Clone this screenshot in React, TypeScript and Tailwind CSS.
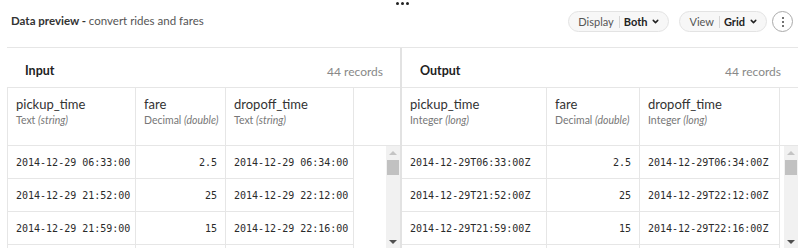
import { ChevronDown } from 'lucide-react';

type Column = { name: string; kind: string; sub: string; width: string; align?: 'right' };

const inputColumns: Column[] = [
  { name: 'pickup_time', kind: 'Text', sub: 'string', width: 'w-[128px]' },
  { name: 'fare', kind: 'Decimal', sub: 'double', width: 'w-[90px]', align: 'right' },
  { name: 'dropoff_time', kind: 'Text', sub: 'string', width: 'w-[128px]' },
];

const outputColumns: Column[] = [
  { name: 'pickup_time', kind: 'Integer', sub: 'long', width: 'w-[145px]' },
  { name: 'fare', kind: 'Decimal', sub: 'double', width: 'w-[93px]', align: 'right' },
  { name: 'dropoff_time', kind: 'Integer', sub: 'long', width: 'w-[140px]' },
];

const inputRows = [
  ['2014-12-29 06:33:00', '2.5', '2014-12-29 06:34:00'],
  ['2014-12-29 21:52:00', '25', '2014-12-29 22:12:00'],
  ['2014-12-29 21:59:00', '15', '2014-12-29 22:16:00'],
];

const outputRows = [
  ['2014-12-29T06:33:00Z', '2.5', '2014-12-29T06:34:00Z'],
  ['2014-12-29T21:52:00Z', '25', '2014-12-29T22:12:00Z'],
  ['2014-12-29T21:59:00Z', '15', '2014-12-29T22:16:00Z'],
];

function Pill({ label, value }: { label: string; value: string }) {
  return (
    <div className="flex items-center h-[21px] pl-[9px] pr-[8px] rounded-full border border-[#e3e3e3] bg-[#f7f7f7] text-[11px] leading-none">
      <span className="text-[#555]">{label}</span>
      <span className="ml-[5px] mr-[4px] h-[12px] w-px bg-[#d6d6d6]"></span>
      <span className="font-bold text-[#222]">{value}</span>
      <ChevronDown size={9} strokeWidth={4} className="ml-[4px] text-[#222]" />
    </div>
  );
}

function Scrollbar() {
  return (
    <div className="w-[14px] bg-[#f1f1f1] flex flex-col items-center">
      <div className="h-[14px] flex items-center justify-center">
        <div className="w-0 h-0 border-l-[4px] border-r-[4px] border-b-[4px] border-l-transparent border-r-transparent border-b-[#c4c4c4]"></div>
      </div>
      <div className="w-[12px] h-[15px] bg-[#c1c1c1]"></div>
      <div className="flex-1"></div>
      <div className="h-[12px] flex items-center justify-center">
        <div className="w-0 h-0 border-l-[4px] border-r-[4px] border-t-[4px] border-l-transparent border-r-transparent border-t-[#505050]"></div>
      </div>
    </div>
  );
}

function Panel({
  title,
  columns,
  rows,
  className,
  bordered,
}: {
  title: string;
  columns: Column[];
  rows: string[][];
  className: string;
  bordered?: boolean;
}) {
  const edge = bordered ? 'border-l border-[#e6e6e6]' : '';
  return (
    <div className={`flex flex-col ${className}`}>
      <div className="h-[39px] shrink-0 flex items-center justify-between pt-[8px] pl-[18px] pr-[17px]">
        <span className="text-[12.5px] font-bold text-[#222]">{title}</span>
        <span className="text-[12px] text-[#888]">44 records</span>
      </div>
      <div className={`flex h-[59px] shrink-0 border-t border-b border-[#e6e6e6] ${edge}`}>
        {columns.map((col) => (
          <div key={col.name} className={`${col.width} shrink-0 border-r border-[#e6e6e6] px-[8px] pt-[7px] whitespace-nowrap`}>
            <div className="text-[13px] text-[#333] leading-[18px]">{col.name}</div>
            <div className="text-[10.5px] text-[#777] leading-[15px]">
              {col.kind} <span className="italic">({col.sub})</span>
            </div>
          </div>
        ))}
        <div className="flex-1"></div>
      </div>
      <div className="flex flex-1 min-h-0">
        <div className={`flex flex-col ${edge}`}>
          {rows.map((row, i) => (
            <div key={i} className="flex h-[33px] shrink-0 border-b border-[#e6e6e6] font-['DejaVu_Sans_Mono',monospace] text-[10px] text-[#2a2a2a] whitespace-nowrap">
              {row.map((cell, j) => (
                <div
                  key={j}
                  className={`${columns[j].width} shrink-0 border-r border-[#e6e6e6] px-[8px] flex items-center ${
                    columns[j].align === 'right' ? 'justify-end' : ''
                  }`}
                >
                  {cell}
                </div>
              ))}
            </div>
          ))}
          <div className="flex flex-1">
            {columns.map((col) => (
              <div key={col.name} className={`${col.width} shrink-0 border-r border-[#e6e6e6]`}></div>
            ))}
          </div>
        </div>
        <div className="flex-1"></div>
        <Scrollbar />
      </div>
    </div>
  );
}

export default function App() {
  return (
    <div className="w-[800px] h-[248px] overflow-hidden bg-white font-['Lato',sans-serif] flex flex-col">
      <div className="relative h-[47px] shrink-0 flex items-center justify-between pl-[11px] pr-[7px]">
        <div className="absolute left-[396px] top-[2px] flex gap-[2px]">
          <span className="w-[3px] h-[3px] rounded-full bg-[#222]"></span>
          <span className="w-[3px] h-[3px] rounded-full bg-[#222]"></span>
          <span className="w-[3px] h-[3px] rounded-full bg-[#222]"></span>
        </div>
        <div className="text-[11.5px] -mt-[6px]">
          <span className="font-bold text-[#333]">Data preview - </span>
          <span className="text-[#555]">convert rides and fares</span>
        </div>
        <div className="flex items-center gap-[10px] -mt-[4px]">
          <Pill label="Display" value="Both" />
          <Pill label="View" value="Grid" />
          <div className="w-[21px] h-[21px] -ml-[5px] rounded-full border border-[#aaa] flex flex-col items-center justify-center gap-[2px]">
            <span className="w-[2px] h-[2px] rounded-full bg-[#444]"></span>
            <span className="w-[2px] h-[2px] rounded-full bg-[#444]"></span>
            <span className="w-[2px] h-[2px] rounded-full bg-[#444]"></span>
          </div>
        </div>
      </div>
      <div className="flex flex-1 min-h-0 ml-[7px] mr-[2px] border-t border-[#e6e6e6]">
        <Panel title="Input" columns={inputColumns} rows={inputRows} className="w-[395px] border-r-2 border-[#e2e2e2]" bordered />
        <Panel title="Output" columns={outputColumns} rows={outputRows} className="flex-1" />
      </div>
    </div>
  );
}
